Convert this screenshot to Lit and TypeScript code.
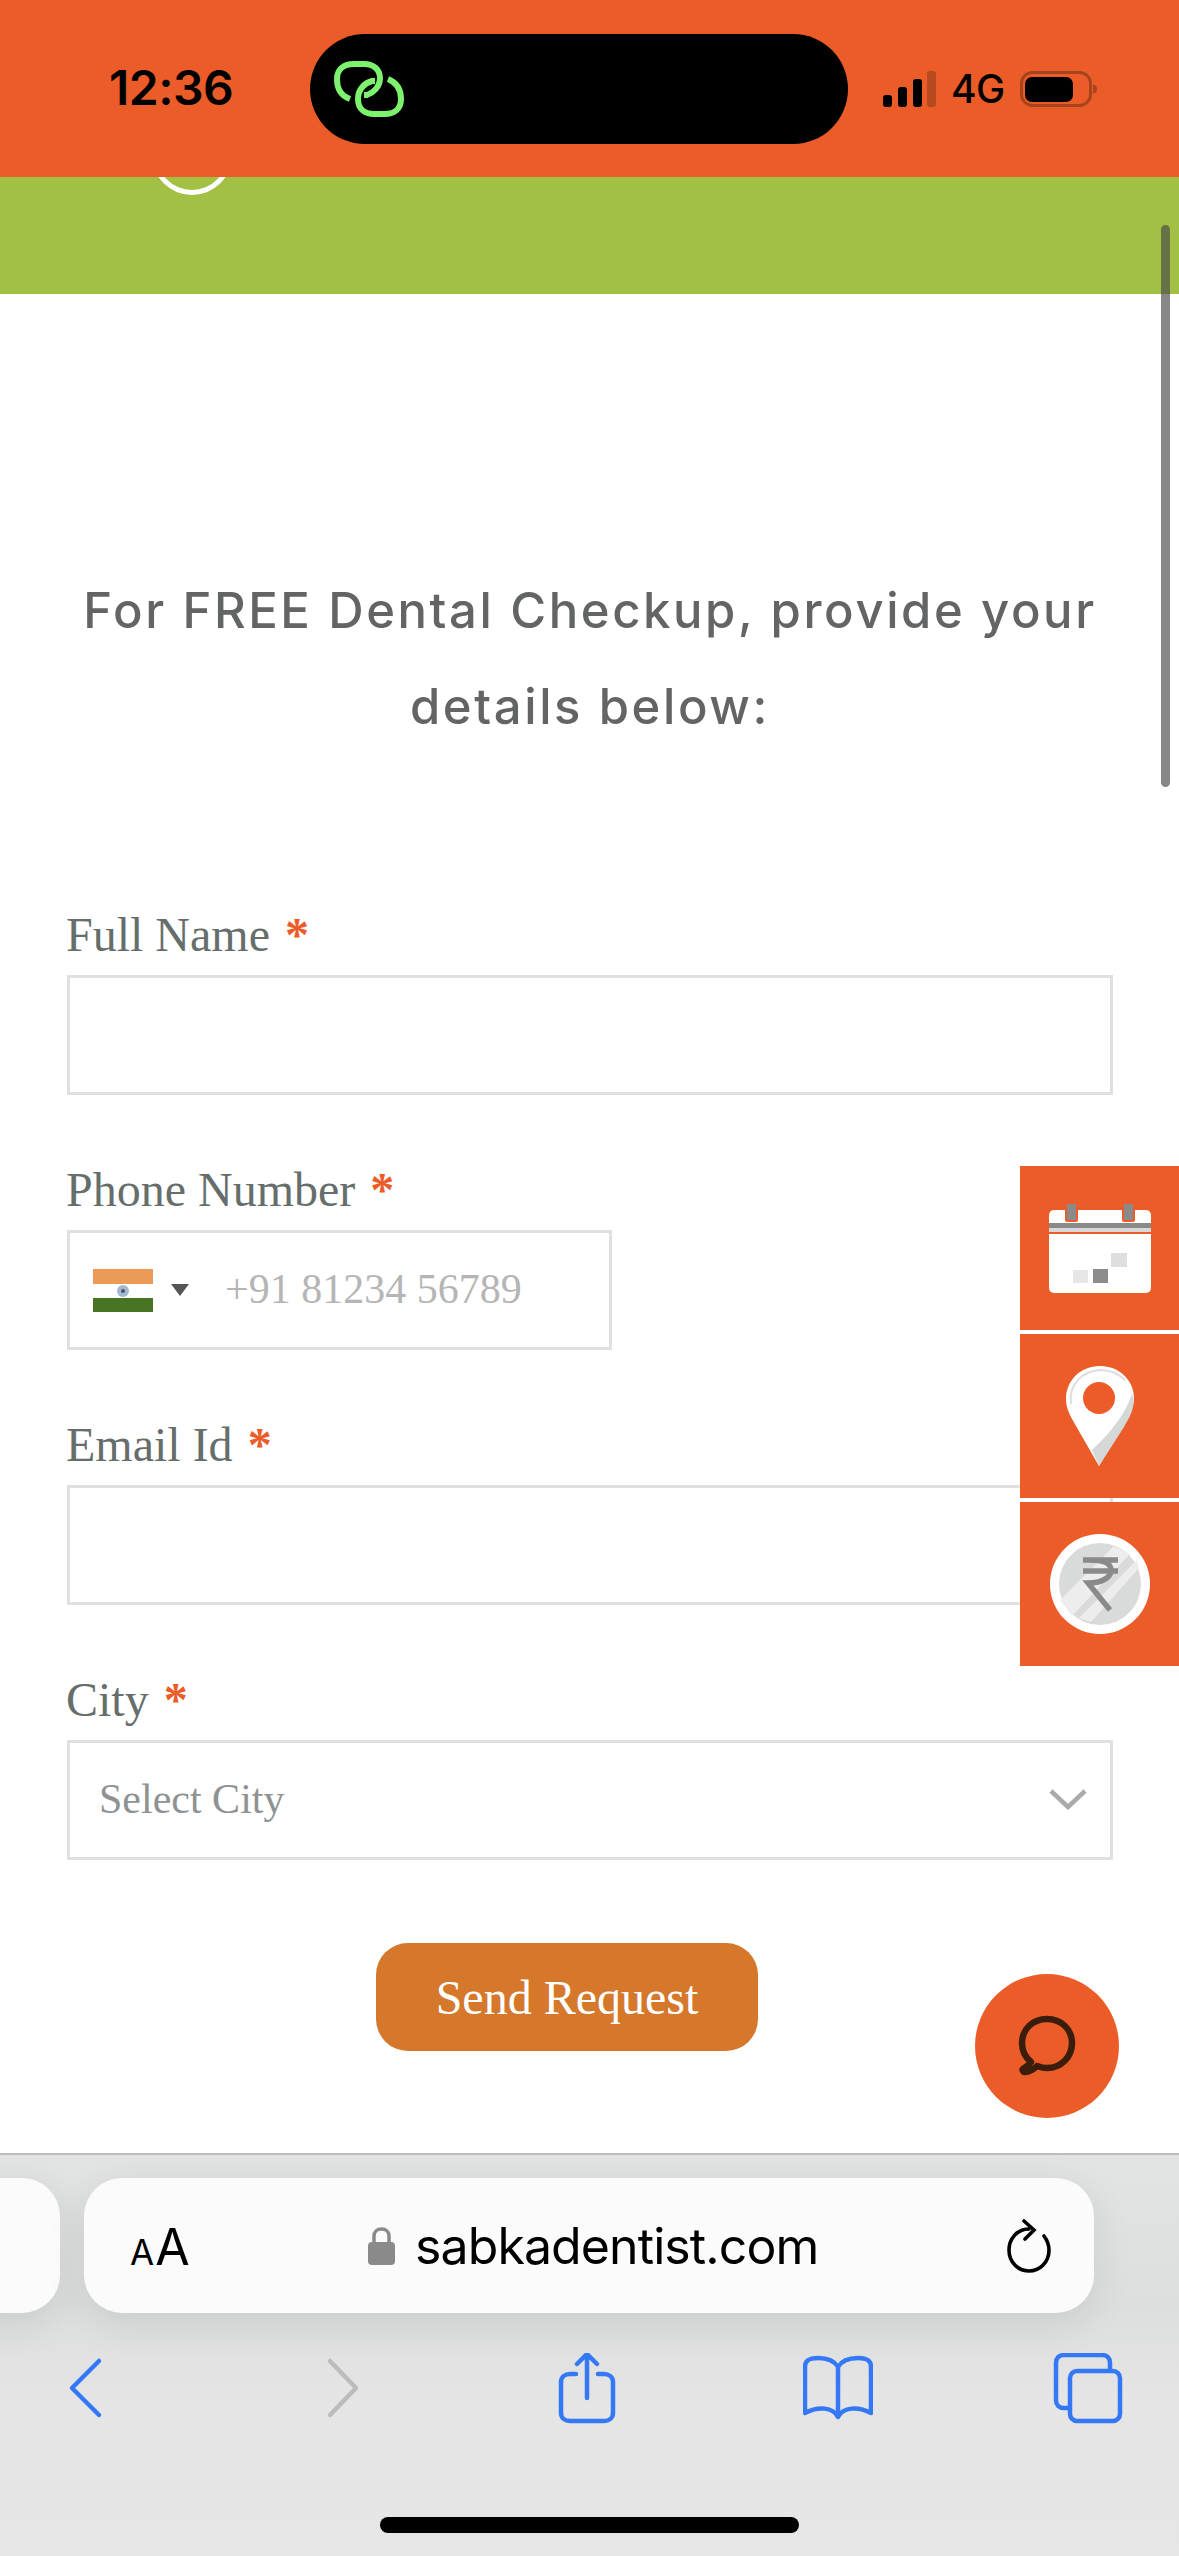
import { LitElement, html, css } from 'lit';
import { customElement } from 'lit/decorators.js';

@customElement('app-root')
export class AppRoot extends LitElement {
  static styles = css`
    :host {
      display: block;
      width: 1179px;
      height: 2556px;
      overflow: hidden;
      font-family: 'Liberation Serif', serif;
    }

    .page {
      position: relative;
      display: flex;
      flex-direction: column;
      height: 2556px;
      background: #fff;
      overflow: hidden;
    }

    /* status bar */
    .status {
      flex: none;
      height: 177px;
      background: #eb5c29;
      display: flex;
      align-items: center;
      font-family: Inter, 'Liberation Sans', sans-serif;
      color: #000;
      box-sizing: border-box;
      padding: 0 0 0 109px;
    }
    .time {
      width: 124px;
      font-size: 48px;
      font-weight: 600;
      letter-spacing: -0.5px;
      margin-top: -2px;
    }
    .island {
      margin-left: 77px;
      width: 538px;
      height: 110px;
      border-radius: 55px;
      background: #000;
      display: flex;
      align-items: center;
      padding-left: 24px;
      box-sizing: border-box;
    }
    .status-right {
      margin-left: 35px;
      display: flex;
      align-items: center;
    }
    .net {
      font-size: 39px;
      font-weight: 500;
      margin: 0 15px 0 15px;
      letter-spacing: -0.5px;
    }

    .green {
      flex: none;
      height: 117px;
      background: #a1c044;
      position: relative;
      overflow: hidden;
    }
    .ring {
      position: absolute;
      left: 152px;
      top: -62px;
      width: 70px;
      height: 70px;
      border: 5px solid #fff;
      border-radius: 50%;
    }

    /* form */
    .main {
      flex: 1;
      padding: 269px 66px 0 67px;
      box-sizing: border-box;
    }
    .intro {
      margin: 0 -10px 160px;
      text-align: center;
      font-family: Inter, 'Open Sans', sans-serif;
      font-size: 49px;
      font-weight: 500;
      line-height: 96px;
      letter-spacing: 2.6px;
      color: #636465;
    }
    .form {
      display: flex;
      flex-direction: column;
      gap: 75px;
    }
    .label {
      height: 60px;
      font-size: 48px;
      line-height: 40px;
      margin-left: -1px;
      color: #666e6b;
    }
    .req {
      color: #eb5c29;
      font-weight: 700;
      margin-left: 3px;
    }
    .box {
      height: 120px;
      box-sizing: border-box;
      border: 3px solid #e0e0e0;
      display: flex;
      align-items: center;
    }
    .box.phone {
      width: 545px;
      padding: 0 0 2px 23px;
    }
    .flag {
      display: block;
      margin-top: 2px;
    }
    .caret {
      width: 0;
      height: 0;
      margin: 2px 0 0 18px;
      border-left: 9px solid transparent;
      border-right: 9px solid transparent;
      border-top: 12px solid #555;
    }
    .hint {
      margin-left: 36px;
      font-size: 42px;
      color: #b5b5b5;
    }
    .box.city {
      justify-content: space-between;
      padding: 0 23px 2px 29px;
      font-size: 42px;
      color: #8f9292;
    }
    .send {
      align-self: center;
      width: 382px;
      height: 108px;
      margin: 8px 0 0 -46px;
      border: 0;
      border-radius: 32px;
      background: #d5782c;
      color: #fff;
      font-family: inherit;
      font-size: 48px;
      padding: 0;
    }

    /* floating stuff over the page */
    .scrollbar {
      position: absolute;
      left: 1161px;
      top: 225px;
      width: 9px;
      height: 562px;
      border-radius: 5px;
      background: rgba(70, 70, 70, 0.65);
    }
    .side {
      position: absolute;
      right: 0;
      top: 1166px;
      width: 159px;
      display: flex;
      flex-direction: column;
      gap: 4px;
    }
    .tile {
      height: 164px;
      background: #eb5c29;
      display: flex;
      align-items: center;
      justify-content: center;
    }
    .chat {
      position: absolute;
      left: 975px;
      top: 1974px;
      width: 144px;
      height: 144px;
      border-radius: 50%;
      background: #eb5c29;
      display: flex;
      align-items: center;
      justify-content: center;
    }

    /* safari bars */
    .safari {
      flex: none;
      height: 403px;
      box-sizing: border-box;
      border-top: 2px solid #bdbdbd;
      background: linear-gradient(#e2e3e3, #dddede 38%, #e5e5e5 62%, #e6e6e6);
      position: relative;
      font-family: Inter, 'Liberation Sans', sans-serif;
    }
    .bar-row {
      display: flex;
      gap: 24px;
      padding-top: 23px;
      margin-left: -40px;
    }
    .pill {
      height: 135px;
      background: #fbfbfb;
      border-radius: 38px;
      box-shadow: 0 10px 40px rgba(0, 0, 0, 0.09);
    }
    .pill.prev {
      width: 100px;
      flex: none;
    }
    .pill.url {
      width: 1010px;
      flex: none;
      display: flex;
      align-items: center;
      box-sizing: border-box;
      padding: 0 43px 0 46px;
      color: #000;
    }
    .aa {
      width: 238px;
      display: flex;
      align-items: baseline;
      font-size: 50px;
      margin-top: 2px;
    }
    .aa small {
      font-size: 35px;
      margin-right: 1px;
    }
    .host {
      flex: 1;
      display: flex;
      align-items: center;
      font-size: 50px;
      letter-spacing: -0.9px;
    }
    .host svg {
      margin-right: 20px;
    }
    .tools {
      display: flex;
      justify-content: space-between;
      padding: 40px 56px 0 51px;
    }
    .home {
      position: absolute;
      left: 380px;
      bottom: 23px;
      width: 419px;
      height: 16px;
      border-radius: 8px;
      background: #000;
    }
  `;

  renderField(label: string, body: unknown) {
    return html`
      <div class="field">
        <div class="label">${label} <span class="req">*</span></div>
        ${body}
      </div>
    `;
  }

  render() {
    return html`
      <div class="page">
        <div class="status">
          <div class="time">12:36</div>
          <div class="island">
            <svg width="70" height="56" viewBox="0 0 70 56" fill="none" stroke="#7df26d" stroke-width="6">
              <path d="M16 38C5 34 3 26 3 18 3 8 10 3 20 3h10c10 0 16 6 16 14 0 9-7 15-13 17h-3" />
              <path d="M54 18c10 4 13 12 13 20 0 10-7 15-16 15H40c-9 0-16-5-16-15 0-9 6-16 14-18h3" />
            </svg>
          </div>
          <div class="status-right">
            <svg width="53" height="36" viewBox="0 0 53 36">
              <rect x="0" y="24" width="9" height="12" rx="3" />
              <rect x="15" y="16" width="9" height="20" rx="3" />
              <rect x="30" y="8" width="9" height="28" rx="3" />
              <rect x="44" y="0" width="9" height="36" rx="3" fill="#b64a1e" />
            </svg>
            <span class="net">4G</span>
            <svg width="77" height="36" viewBox="0 0 77 36" fill="none">
              <rect x="1.500" y="1.500" width="69" height="33" rx="11" stroke="#a8441c" stroke-width="3" />
              <rect x="5" y="6" width="48" height="25" rx="7" fill="#000" />
              <path d="M73 13c3 1 4 3 4 5s-1 4-4 5z" fill="#a8441c" />
            </svg>
          </div>
        </div>
        <div class="green"><div class="ring"></div></div>

        <div class="main">
          <p class="intro">For FREE Dental Checkup, provide your<br />details below:</p>
          <div class="form">
            ${this.renderField('Full Name', html`<div class="box"></div>`)}
            ${this.renderField(
              'Phone Number',
              html`<div class="box phone">
                <svg class="flag" width="60" height="43" viewBox="0 0 60 43">
                  <rect width="60" height="15" fill="#ec9a58" />
                  <rect y="15" width="60" height="14" fill="#fff" />
                  <rect y="29" width="60" height="14" fill="#487524" />
                  <circle cx="30" cy="22" r="6" fill="#a3b9d3" />
                  <circle cx="30" cy="22" r="2" fill="#555" />
                </svg>
                <span class="caret"></span>
                <span class="hint">+91 81234 56789</span>
              </div>`
            )}
            ${this.renderField('Email Id', html`<div class="box"></div>`)}
            ${this.renderField(
              'City',
              html`<div class="box city">
                <span>Select City</span>
                <svg width="38" height="22" viewBox="0 0 38 22" fill="none" stroke="#aaa" stroke-width="4.500">
                  <path d="M2 3l17 16L36 3" />
                </svg>
              </div>`
            )}
            <button class="send">Send Request</button>
          </div>
        </div>

        <div class="safari">
          <div class="bar-row">
            <div class="pill prev"></div>
            <div class="pill url">
              <div class="aa"><small>A</small>A</div>
              <div class="host">
                <svg width="27" height="38" viewBox="0 0 27 38" fill="none">
                  <path d="M6 16V9c0-4 3-7 7.500-7S21 5 21 9v7" stroke="#8a8a8a" stroke-width="3.500" />
                  <rect y="15" width="27" height="23" rx="4" fill="#8a8a8a" />
                </svg>
                sabkadentist.com
              </div>
              <svg width="44" height="54" viewBox="0 0 44 54" fill="none" stroke="#000" stroke-width="3.600" stroke-linecap="round">
                <path d="M22 10C10 10 2 20 2 31c0 12 9 21 20 21s20-9 20-21c0-6-2-10-5-14" />
                <path d="M17 2l10 9-9 9" />
              </svg>
            </div>
          </div>
          <div class="tools">
            <svg width="70" height="76" viewBox="0 0 70 76" fill="none" stroke="#3478f6" stroke-width="4.500" stroke-linecap="round" stroke-linejoin="round">
              <path d="M48 8L21 35l27 27" />
            </svg>
            <svg width="70" height="76" viewBox="0 0 70 76" fill="none" stroke="#bcbcbc" stroke-width="4.500" stroke-linecap="round" stroke-linejoin="round">
              <path d="M28 8l26 27-26 27" />
            </svg>
            <svg width="70" height="76" viewBox="0 0 70 76" fill="none" stroke="#3478f6" stroke-width="4.500" stroke-linecap="round" stroke-linejoin="round">
              <path d="M24 21h-6c-5 0-9 3-9 8v31c0 5 4 8 9 8h34c5 0 9-3 9-8V29c0-5-4-8-9-8h-6" />
              <path d="M35 45V1M25 11L35 1l10 10" />
            </svg>
            <svg width="70" height="76" viewBox="0 0 70 76" fill="none" stroke="#3478f6" stroke-width="4.500" stroke-linejoin="round">
              <path d="M35 64c-5-10-20-11-33-4V14C2 7 7 5 15 5c9 0 16 2 20 9 4-7 11-9 20-9 8 0 13 2 13 9v46c-13-7-28-6-33 4zM35 14v50" />
            </svg>
            <svg width="70" height="76" viewBox="0 0 70 76" fill="none" stroke="#3478f6" stroke-width="4.500" stroke-linejoin="round">
              <rect x="17" y="18" width="50" height="50" rx="7" />
              <path d="M17 55h-6c-5 0-8-3-8-8V10c0-5 3-8 8-8h38c5 0 8 3 8 8v8" />
            </svg>
          </div>
          <div class="home"></div>
        </div>

        <div class="scrollbar"></div>
        <div class="side">
          <div class="tile">
            <svg width="102" height="90" viewBox="0 0 102 90">
              <rect y="7" width="102" height="83" rx="5" fill="#fff" />
              <rect y="20" width="102" height="5" fill="#8a8a8a" />
              <rect y="25" width="102" height="4" fill="#d8d8d8" />
              <rect y="29" width="102" height="2" fill="#eb5c29" />
              <rect x="17" y="0" width="11" height="18" rx="1" fill="#8a8a8a" stroke="#eb5c29" stroke-width="2" />
              <rect x="74" y="0" width="11" height="18" rx="1" fill="#8a8a8a" stroke="#eb5c29" stroke-width="2" />
              <rect x="62" y="50" width="16" height="14" fill="#dedede" />
              <rect x="24" y="67" width="15" height="13" fill="#e6e6e6" />
              <rect x="44" y="66" width="15" height="14" fill="#8c8c8c" />
            </svg>
          </div>
          <div class="tile">
            <svg width="70" height="100" viewBox="0 0 70 100">
              <path d="M35 0C15 0 1 15 1 33c0 8 3 14 6 20l27 47 27-47c4-7 8-13 8-21C69 15 55 0 35 0z" fill="#fff" />
              <path d="M34 100l-7-16C42 70 60 50 67 28c2 5 2 9 1 13-2 9-6 14-9 20z" fill="#d4d8d6" />
              <path d="M6 38C3 18 18 5 35 4c11 0 19 4 25 10" fill="none" stroke="#dcdedd" stroke-width="2" />
              <circle cx="34" cy="32" r="16" fill="#eb5c29" />
            </svg>
          </div>
          <div class="tile">
            <svg width="102" height="100" viewBox="0 0 102 100">
              <circle cx="51" cy="50" r="50" fill="#fff" />
              <circle cx="51" cy="50" r="41" fill="#d9dbda" />
              <path d="M11 66L65 12l16 8-58 62z" fill="#ecedec" />
              <path d="M30 84L88 26l2 8-48 54z" fill="#ecedec" />
              <path d="M34 26h35M34 37h35M40 26c16 0 22 4 22 10 0 8-10 13-23 13l22 27" fill="none" stroke="#8a8a8a" stroke-width="5.500" />
            </svg>
          </div>
        </div>
        <div class="chat">
          <svg width="60" height="62" viewBox="0 0 60 62" fill="none">
            <path d="M14 47C8 42 5 35 5 28 5 14 16 4 30 4s25 10 25 24-11 25-25 25c-4 0-7-1-10-2-3 3-8 6-12 6-2 0-3-2-2-3 3-2 6-4 8-7z" stroke="#3b1d0c" stroke-width="6.500" stroke-linejoin="round" />
          </svg>
        </div>
      </div>
    `;
  }
}
